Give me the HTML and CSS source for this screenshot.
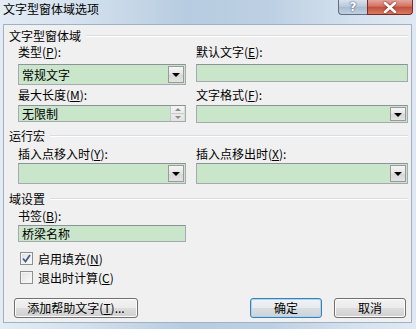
FILE: index.html
```html
<!DOCTYPE html>
<html lang="zh">
<head>
<meta charset="utf-8">
<link rel="stylesheet" href="styles.css">
</head>
<body>
<div class="window">
  <div class="titlebar">
    <span class="title">文字型窗体域选项</span>
    <div class="caption">
      <div class="cbtn help">?</div>
      <div class="cbtn close">
        <svg width="14" height="11" viewBox="0 0 14 11"><path d="M2 1 L12 10 M12 1 L2 10" stroke="#fff" stroke-width="2.6" stroke-linecap="round"/></svg>
      </div>
    </div>
  </div>
  <div class="client">
    <div class="ghead first"><span>文字型窗体域</span><i></i></div>
    <div class="grid">
      <div class="field r1">
        <div class="lbl">类型(<u>P</u>):</div>
        <div class="select tall"><span>常规文字</span><b class="dd"><em></em></b></div>
      </div>
      <div class="field r1">
        <div class="lbl">默认文字(<u>E</u>):</div>
        <div class="textbox t18"></div>
      </div>
      <div class="field r2">
        <div class="lbl">最大长度(<u>M</u>):</div>
        <div class="textbox t17"><span>无限制</span><b class="spin"><em class="up"></em><em class="down"></em></b></div>
      </div>
      <div class="field r2">
        <div class="lbl">文字格式(<u>F</u>):</div>
        <div class="select mid"><span></span><b class="dd"><em></em></b></div>
      </div>
    </div>

    <div class="ghead g2"><span>运行宏</span><i></i></div>
    <div class="grid">
      <div class="field r3">
        <div class="lbl">插入点移入时(<u>Y</u>):</div>
        <div class="select tall"><span></span><b class="dd"><em></em></b></div>
      </div>
      <div class="field r3">
        <div class="lbl">插入点移出时(<u>X</u>):</div>
        <div class="select tall"><span></span><b class="dd"><em></em></b></div>
      </div>
    </div>

    <div class="ghead g3"><span>域设置</span><i></i></div>
    <div class="grid">
      <div class="field r4">
        <div class="lbl">书签(<u>B</u>):</div>
        <div class="textbox t17"><span>桥梁名称</span></div>
      </div>
    </div>
    <div class="checks">
      <div class="chk"><span class="box checked"><svg width="9" height="9" viewBox="0 0 9 9"><path d="M1 4.5 L3.5 7.5 L8 1" fill="none" stroke="#4a5f86" stroke-width="1.8"/></svg></span>启用填充(<u>N</u>)</div>
      <div class="chk c2"><span class="box"></span>退出时计算(<u>C</u>)</div>
    </div>

    <div class="buttons">
      <button class="btn wide">添加帮助文字(<u>T</u>)...</button>
      <span class="spacer"></span>
      <button class="btn def">确定</button>
      <button class="btn">取消</button>
    </div>
  </div>
</div>
</body>
</html>
```

FILE: styles.css
```css
* { box-sizing: border-box; }
html, body { margin: 0; padding: 0; }
body {
  width: 416px;
  height: 329px;
  overflow: hidden;
  font-family: "Noto Sans CJK SC", "Noto Sans", sans-serif;
  font-size: 12px;
  color: #000;
}
.window {
  width: 416px;
  height: 329px;
  display: flex;
  flex-direction: column;
  background: linear-gradient(90deg, #e3ecf5 0%, #d3e0ed 20%, #b7cce0 45%, #bdd0e3 65%, #d4e1ee 85%, #e0e9f3 100%);
}
.titlebar {
  height: 24px;
  position: relative;
  flex: none;
}
.title {
  display: block;
  padding-left: 3px;
  line-height: 18px;
  font-size: 12px;
}
.caption {
  position: absolute;
  top: 0;
  right: 3px;
  display: flex;
}
.cbtn {
  height: 15px;
  display: flex;
  align-items: center;
  justify-content: center;
  border: 1px solid #5f6f86;
  border-top: none;
}
.help {
  width: 29px;
  border-radius: 0 0 0 4px;
  border-right: none;
  background: linear-gradient(#d9e3ee, #b6c6d8 50%, #a9bbd0 51%, #c3d2e2);
  color: #fff;
  font-family: "DejaVu Sans", sans-serif;
  font-weight: bold;
  font-size: 12px;
  text-shadow: 0 0 2px #4a5c75, 0 0 1px #4a5c75;
}
.close {
  width: 46px;
  border-radius: 0 0 4px 0;
  border-color: #7a2b24;
  background: linear-gradient(#e6a59c, #d27362 45%, #c24e3b 50%, #d77b62);
}
.close svg { filter: drop-shadow(0 0 1px #6a1e16); }

.client {
  flex: 1;
  margin: 0 4px 6px 3px;
  border: 1px solid #9eb1c6;
  background: #f0f0f0;
  padding: 0 3px 4px 5px;
  display: flex;
  flex-direction: column;
}
.ghead {
  display: flex;
  align-items: center;
  height: 14px;
  line-height: 14px;
}
.ghead i {
  flex: 1;
  height: 2px;
  margin-left: 5px;
  border-top: 1px solid #d5dfe5;
  border-bottom: 1px solid #ffffff;
}
.ghead.first { margin-top: 4px; }
.ghead.g2 { margin-top: 6px; }
.ghead.g3 { margin-top: 8px; }

.grid {
  display: grid;
  grid-template-columns: 168px 212px;
  column-gap: 10px;
  margin-left: 9px;
  align-items: start;
}
.field { display: flex; flex-direction: column; }
.lbl { line-height: 14px; height: 14px; white-space: nowrap; }
.lbl u, .chk u, .btn u { text-decoration: underline; }
.r1 .lbl { margin-top: 2px; }
.r1 .lbl + * { margin-top: 5px; }
.r2 .lbl { margin-top: 3px; }
.r2 .lbl + * { margin-top: 3px; }
.r3 .lbl { margin-top: 4px; }
.r3 .lbl + * { margin-top: 2px; }
.r4 .lbl { margin-top: 3px; }
.r4 .lbl + * { margin-top: 2px; }

.select, .textbox {
  position: relative;
  background: #c9e6ca;
  border: 1px solid #a6aab0;
  border-top-color: #8e9298;
  display: flex;
  align-items: center;
  padding-left: 3px;
  line-height: 14px;
}
.select.tall { height: 21px; }
.select.mid { height: 18px; }
.textbox.t18 { height: 18px; }
.textbox.t17 { height: 17px; }
.select span, .textbox span { flex: 1; }
.dd {
  position: absolute;
  right: 1px;
  top: 1px;
  bottom: 1px;
  width: 16px;
  border: 1px solid #9a9a9a;
  background: linear-gradient(#f6f6f6, #e3e3e3 50%, #d6d6d6 51%, #e4e4e4);
  display: flex;
  align-items: center;
  justify-content: center;
}
.dd em {
  width: 0;
  height: 0;
  border-left: 4px solid transparent;
  border-right: 4px solid transparent;
  border-top: 4px solid #000;
  margin-top: 1px;
}
.spin {
  position: absolute;
  right: 1px;
  top: 0;
  bottom: 0;
  width: 14px;
  display: flex;
  flex-direction: column;
  border-left: 1px solid #c8c8c8;
  background: linear-gradient(#f4f4f4, #e2e2e2);
}
.spin em {
  flex: 1;
  display: flex;
  align-items: center;
  justify-content: center;
  position: relative;
}
.spin em.up { border-bottom: 1px solid #c8c8c8; }
.spin em::after {
  content: "";
  width: 0;
  height: 0;
  border-left: 3px solid transparent;
  border-right: 3px solid transparent;
}
.spin em.up::after { border-bottom: 3px solid #8a8a8a; }
.spin em.down::after { border-top: 3px solid #8a8a8a; }

.checks { margin-left: 11px; margin-top: 9px; }
.chk {
  display: flex;
  align-items: center;
  height: 15px;
  line-height: 14px;
}
.chk.c2 { margin-top: 4px; }
.box {
  width: 13px;
  height: 13px;
  border: 1px solid #8e8f8f;
  background: linear-gradient(135deg, #e0e0e0, #fbfbfb);
  margin-right: 5px;
  display: flex;
  align-items: center;
  justify-content: center;
  box-shadow: inset 0 0 0 1px #f4f4f4;
}

.buttons {
  margin-top: auto;
  display: flex;
  align-items: center;
  padding-left: 5px;
  padding-right: 2px;
}
.spacer { flex: 1; }
.btn {
  height: 20px;
  width: 72px;
  padding: 0;
  font-family: inherit;
  font-size: 12px;
  line-height: 14px;
  color: #000;
  border: 1px solid #707070;
  border-radius: 3px;
  background: linear-gradient(#f2f2f2, #ebebeb 48%, #dddddd 52%, #cfcfcf);
  box-shadow: inset 0 0 0 1px #fcfcfc;
}
.btn.wide { width: 124px; }
.btn.def {
  border-color: #3c7fb1;
  box-shadow: inset 0 0 0 1px #a8d6f2;
  background: linear-gradient(#f0f3f5, #e7ebee 48%, #d8dde1 52%, #cdd3d8);
  margin-right: 12px;
}
```
